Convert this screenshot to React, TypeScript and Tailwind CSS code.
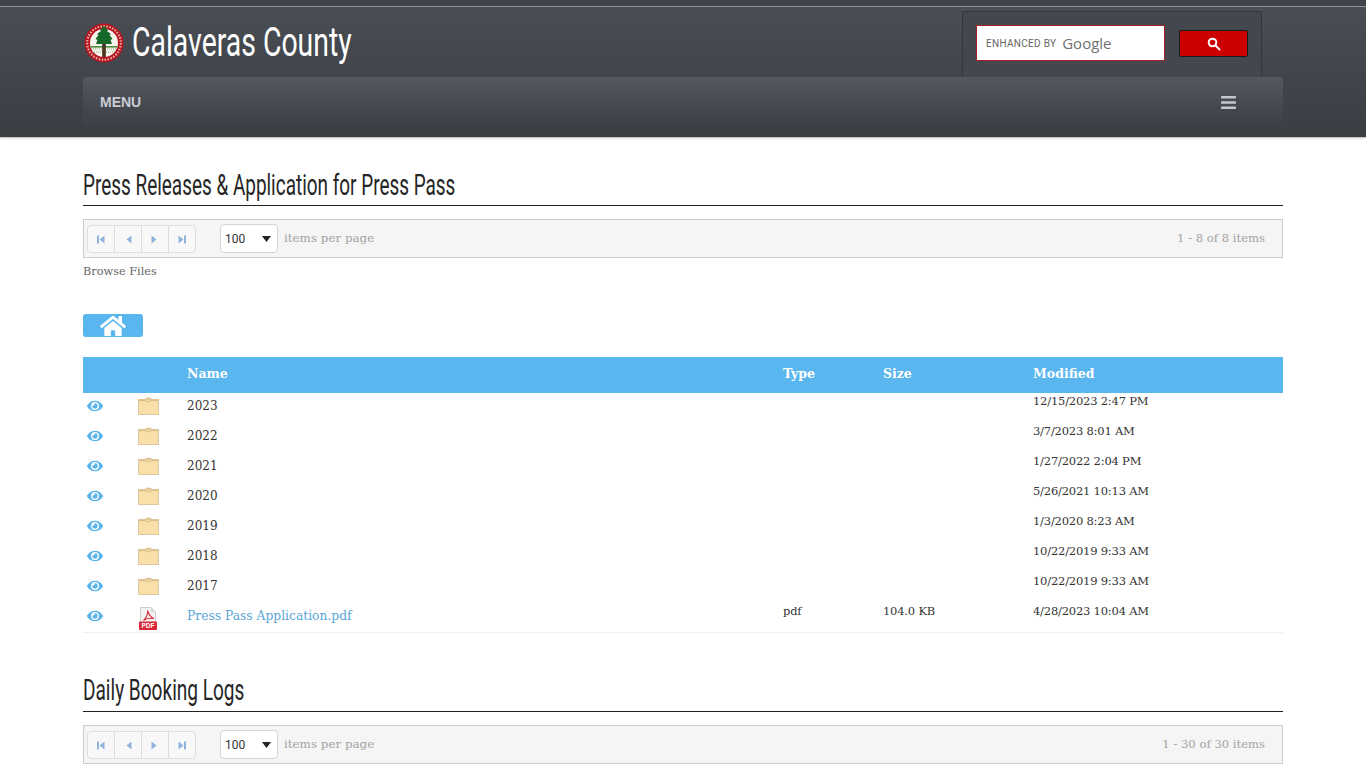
import React from "react";
import { FaEye, FaHome, FaBars } from "react-icons/fa";

const headingFont = "font-['Roboto',sans-serif]";
const bodyFont = "font-['DejaVu_Serif','Liberation_Serif',serif]";

const folders = [
  { name: "2023", modified: "12/15/2023 2:47 PM" },
  { name: "2022", modified: "3/7/2023 8:01 AM" },
  { name: "2021", modified: "1/27/2022 2:04 PM" },
  { name: "2020", modified: "5/26/2021 10:13 AM" },
  { name: "2019", modified: "1/3/2020 8:23 AM" },
  { name: "2018", modified: "10/22/2019 9:33 AM" },
  { name: "2017", modified: "10/22/2019 9:33 AM" },
];

const gridCols = "grid grid-cols-[54px_50px_596px_100px_150px_1fr]";

const Seal = () => (
  <svg width="40" height="40" viewBox="0 0 40 40">
    <circle cx="20" cy="20" r="19.5" fill="#b5121b" />
    <circle cx="20" cy="20" r="16.8" fill="none" stroke="#f0d8d0" strokeWidth="2.2" strokeDasharray="1.6 1.4" opacity="0.75" />
    <circle cx="20" cy="20" r="14" fill="#f5f3ea" />
    <rect x="6.5" y="23" width="27" height="1.6" fill="#4f8f3c" />
    <path d="M7 26 H33 M8 29 H32" stroke="#8aa87a" strokeWidth="1" strokeDasharray="1 1" />
    <rect x="18.2" y="19" width="3.6" height="15" fill="#4a3320" />
    <path d="M20 3 L24 7 L23 8 L27 11 L25.5 12 L28.5 16 L26.5 17 L28 21 L12 21 L13.5 17 L11.5 16 L14.5 12 L13 11 L17 8 L16 7 Z" fill="#17692a" />
  </svg>
);

const Folder = () => (
  <svg width="21" height="18" viewBox="0 0 21 18">
    <path d="M7.5 2.8 L8 1 L13 1 L13.5 2.8 Z" fill="#e6ca94" stroke="#d6bd8b" strokeWidth="0.5" />
    <rect x="0.5" y="2.5" width="20" height="15" fill="#f9dfaa" stroke="#dcc89c" />
    <path d="M1 3.6 L8 3.6 L8.5 4.6 L12.5 4.6 L13 3.6 L20 3.6" fill="none" stroke="#cdb27c" strokeWidth="0.8" />
  </svg>
);

const PdfIcon = () => (
  <svg width="20" height="23" viewBox="0 0 20 23">
    <path d="M2.5 0.5 L13 0.5 L17.5 5 L17.5 22.5 L2.5 22.5 Z" fill="#f4f4f4" stroke="#cccccc" />
    <path d="M13 0.5 L13 5 L17.5 5 Z" fill="#d8d8d8" />
    <path d="M5.5 13.5 C8 11 10 7 9.5 3.5 C11 8 13 10.5 16 11.5 C12 11 8 11.5 5.5 13.5 Z" fill="none" stroke="#d8343f" strokeWidth="1.1" />
    <rect x="1" y="14.5" width="18" height="8.5" rx="1" fill="#d8283a" />
    <text x="10" y="21.3" fontSize="6.5" fontWeight="700" fill="#fff" textAnchor="middle" fontFamily="Liberation Sans">PDF</text>
  </svg>
);

const PagerButton = ({ dir, edge }: { dir: "left" | "right"; edge?: boolean }) => (
  <div className="flex-1 flex items-center justify-center border-r border-[#dddddd] last:border-r-0">
    <svg width="10" height="9" viewBox="0 0 10 9" className="mt-[2px]">
      {dir === "left" ? (
        <>
          {edge && <rect x="1" y="0.5" width="2" height="8" fill="#8fb3dc" />}
          <path d="M8.5 0.5 V8.5 L3.5 4.5 Z" fill="#8fb3dc" />
        </>
      ) : (
        <>
          <path d="M1.5 0.5 V8.5 L6.5 4.5 Z" fill="#8fb3dc" />
          {edge && <rect x="7" y="0.5" width="2" height="8" fill="#8fb3dc" />}
        </>
      )}
    </svg>
  </div>
);

const Pager = ({ summary }: { summary: string }) => (
  <div className="h-[39px] border border-[#cccccc] bg-[#f5f5f5] flex items-center pl-[3px] pr-[17px]">
    <div className="w-[109px] h-[28px] flex border border-[#dddddd] rounded-[4px] bg-[#f8f8f8]">
      <PagerButton dir="left" edge />
      <PagerButton dir="left" />
      <PagerButton dir="right" />
      <PagerButton dir="right" edge />
    </div>
    <div className="ml-[24px] w-[58px] h-[29px] border border-[#d5d5d5] rounded-[4px] bg-white flex items-center justify-between pl-[4px] pr-[6px] text-[12px] text-[#333333] font-['Roboto',sans-serif]">
      <span>100</span>
      <svg width="9" height="6" viewBox="0 0 9 6" className="mt-[1px]">
        <path d="M0 0 H9 L4.5 6 Z" fill="#222222" />
      </svg>
    </div>
    <span className="ml-[6px] text-[11.9px] text-[#a3a3a3]">items per page</span>
    <span className="ml-auto text-[11.6px] text-[#a3a3a3]">{summary}</span>
  </div>
);

const Row = ({
  icon,
  name,
  type,
  size,
  modified,
}: {
  icon: React.ReactNode;
  name: React.ReactNode;
  type?: string;
  size?: string;
  modified: string;
}) => (
  <div className={`${gridCols} h-[30px] text-[11.5px] text-[#333333]`}>
    <div className="pl-[4px] pt-[5px] text-[#5ab4ea] text-[16px]">
      <FaEye />
    </div>
    <div className="pl-[1px] pt-[4px]">{icon}</div>
    <div className="pt-[5px] text-[12px] leading-[16px]">{name}</div>
    <div className="leading-[16px] tracking-[-0.2px]">{type}</div>
    <div className="leading-[16px] tracking-[-0.2px]">{size}</div>
    <div className="leading-[16px] tracking-[-0.2px]">{modified}</div>
  </div>
);

const App = () => {
  return (
    <div className={`h-screen overflow-hidden bg-white ${bodyFont}`}>
      <header className="h-[137px] bg-[linear-gradient(#4a4e55,#3a3e43)] shadow-[0_1px_2px_rgba(0,0,0,0.3)]">
        <div className="h-[6px] bg-[#3f4349]" />
        <div className="h-px bg-[#8f9298]" />
        <div className="w-[1200px] mx-auto">
          <div className="h-[70px] flex">
            <div className="pl-px pt-[16px]">
              <Seal />
            </div>
            <div className={`ml-[8px] pt-[13px] text-[40px] leading-[46px] text-white ${headingFont}`}>
              <span className="inline-block origin-left scale-x-[0.71]">Calaveras County</span>
            </div>
            <div className="ml-auto mr-[21px] mt-[4px] w-[300px] h-[66px] border border-[#33363a] border-b-0 bg-[#44484e] flex pl-[13px] pt-[13px]">
              <div className="w-[189px] h-[36px] bg-white border border-[#a5202a] flex items-center pl-[9px] font-['Roboto',sans-serif]">
                <span className="mt-[1px] text-[10px] text-[#666666] tracking-[0.3px]">ENHANCED BY</span>
                <span className="ml-[6px] text-[15px] text-[#707070] font-['Open_Sans',sans-serif]">Google</span>
              </div>
              <div className="ml-[14px] mt-[5px] w-[69px] h-[27px] bg-[#cc0000] border border-[#1a1a1a] rounded-[2px] flex items-center justify-center">
                <svg width="14" height="14" viewBox="0 0 14 14" fill="none" stroke="#ffffff" strokeWidth="2">
                  <circle cx="5.5" cy="5.5" r="3.8" />
                  <path d="M8.5 8.5 L13 13" />
                </svg>
              </div>
            </div>
          </div>
          <div className="h-[48px] rounded-[4px] bg-[linear-gradient(#53575f,#3d4046)] flex items-center pl-[17px] pr-[46px] pt-[2px]">
            <span className="text-[14px] font-bold text-[#c8ccd2] font-['Liberation_Sans',sans-serif]">MENU</span>
            <FaBars className="ml-auto text-[17px] text-[#c4c8ce]" />
          </div>
        </div>
      </header>

      <main className="w-[1200px] mx-auto">
        <h2 className={`mt-[29px] h-[40px] border-b border-[#222222] text-[29px] leading-[39px] text-[#262626] ${headingFont}`}>
          <span className="inline-block origin-left scale-x-[0.653]">Press Releases &amp; Application for Press Pass</span>
        </h2>
        <div className="mt-[13px]">
          <Pager summary="1 - 8 of 8 items" />
        </div>
        <div className="mt-[6px] text-[11.3px] leading-[16px] text-[#666666]">Browse Files</div>
        <div className="mt-[34px] w-[60px] h-[23px] bg-[#5ab6ee] rounded-[3px] flex items-center justify-center text-white text-[26px]">
          <FaHome />
        </div>

        <div className={`${gridCols} mt-[20px] h-[36px] pb-[2px] bg-[#5ab6ee] items-center text-[12.5px] font-bold text-white`}>
          <div />
          <div />
          <div>Name</div>
          <div>Type</div>
          <div>Size</div>
          <div>Modified</div>
        </div>
        <div className="h-[240px] border-b border-[#f0f0f0]">
          {folders.map((f) => (
            <Row key={f.name} icon={<Folder />} name={f.name} modified={f.modified} />
          ))}
          <Row
            icon={<PdfIcon />}
            name={<span className="text-[#5aa5d8] text-[12.3px]">Press Pass Application.pdf</span>}
            type="pdf"
            size="104.0 KB"
            modified="4/28/2023 10:04 AM"
          />
        </div>

        <h2 className={`mt-[38px] h-[41px] border-b border-[#222222] text-[29px] leading-[39px] text-[#262626] ${headingFont}`}>
          <span className="inline-block origin-left scale-x-[0.657]">Daily Booking Logs</span>
        </h2>
        <div className="mt-[13px]">
          <Pager summary="1 - 30 of 30 items" />
        </div>
      </main>
    </div>
  );
};

export default App;
